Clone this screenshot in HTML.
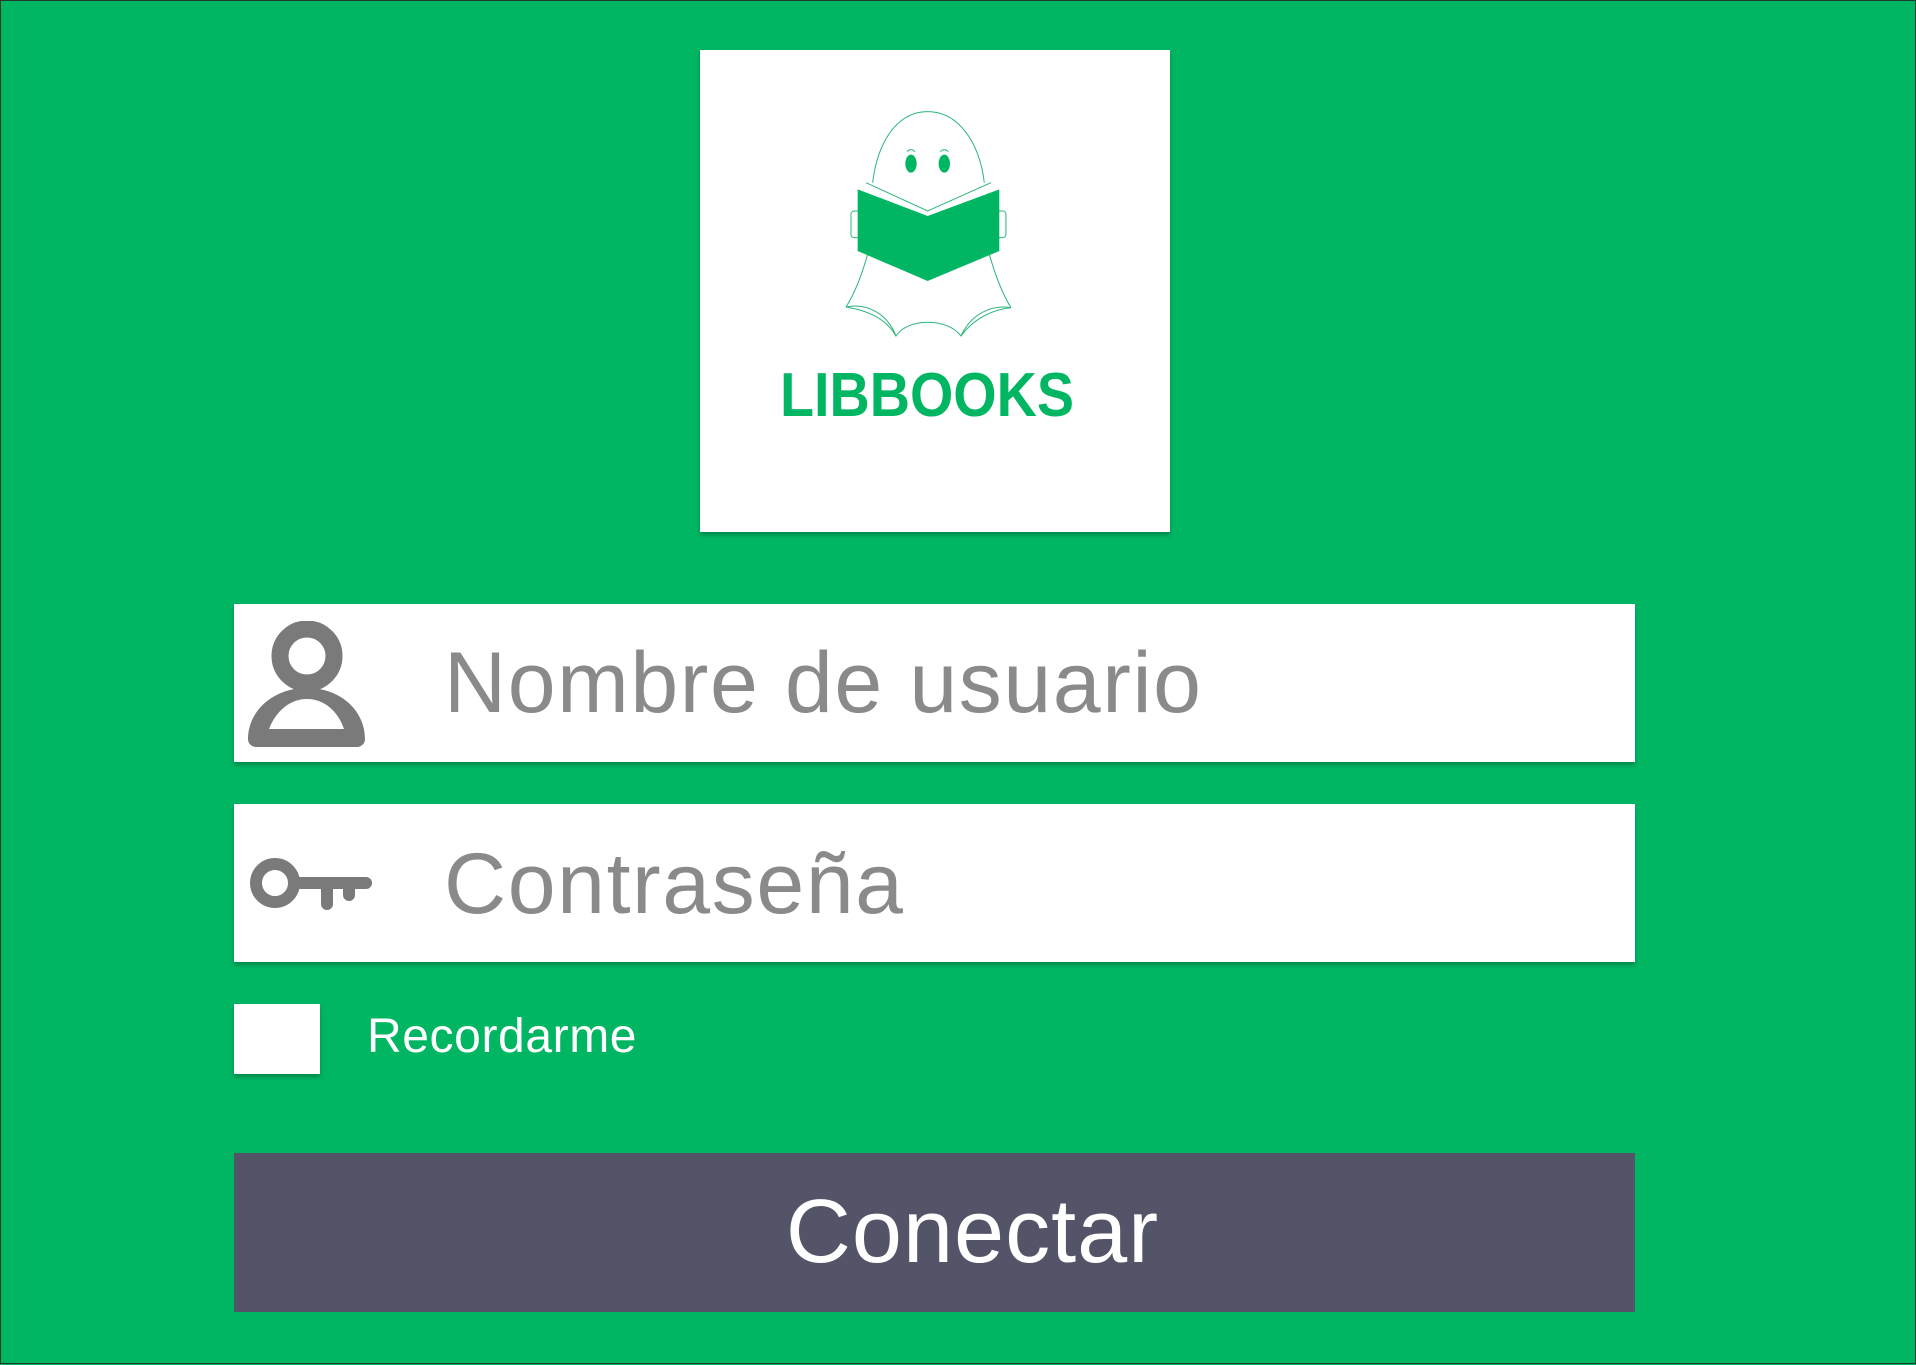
<!DOCTYPE html>
<html><head><meta charset="utf-8"><style>
html,body{margin:0;padding:0}
body{width:1916px;height:1364px;background:#00b662;position:relative;overflow:hidden;font-family:"Liberation Sans",sans-serif;box-sizing:border-box;border:1px solid #1f3a2c}
.box{position:absolute;background:#fff;box-shadow:0 3px 4px rgba(0,0,0,.25)}
.ph{position:absolute;left:443px;font-size:86px;color:#8a8a8a;line-height:1;letter-spacing:1.6px}
</style></head><body>
<div class="box" style="left:699px;top:49px;width:470px;height:482px"></div>
<svg style="position:absolute;left:0;top:0" width="1916" height="1364">
<g transform="translate(680,30) scale(0.3333)" fill="none" stroke="#2fb57a" stroke-width="3">
<path d="M575 455 C590 330 650 242 740 242 C830 242 895 330 910 455"/>
<path d="M560 670 C540 740 520 790 495 828 M925 670 C945 740 965 790 990 830"/>
<path d="M495 828 C560 815 620 850 645 915 C680 860 800 860 840 915 C870 850 930 820 990 830"/>
<path d="M495 828 C570 840 620 870 645 915 M840 915 C880 860 940 835 990 830"/>
<path d="M555 455 L740 540 L930 455"/>
<rect x="510" y="540" width="35" height="80" rx="10"/>
<rect x="940" y="540" width="35" height="80" rx="10"/>
<path d="M678 362 Q690 350 702 362 M778 362 Q790 350 802 362"/>
</g>
<g transform="translate(680,30) scale(0.3333)" fill="#00b662">
<polygon points="530,475 740,555 955,475 955,660 740,750 530,660"/>
<ellipse cx="690" cy="398" rx="17" ry="27"/>
<ellipse cx="790" cy="398" rx="17" ry="27"/>
</g>
<text x="926" y="415" text-anchor="middle" font-family="Liberation Sans" font-weight="bold" font-size="62" fill="#00b662" textLength="294" lengthAdjust="spacingAndGlyphs">LIBBOOKS</text>
</svg>
<div class="box" style="left:233px;top:603px;width:1401px;height:158px"></div>
<div class="box" style="left:233px;top:803px;width:1401px;height:158px"></div>
<svg style="position:absolute;left:247px;top:620px" width="118" height="128" viewBox="0 0 118 128">
<circle cx="59" cy="35" r="27" fill="none" stroke="#7a7a7a" stroke-width="17"/>
<path d="M0 118 C0 90 25 67 59 67 C93 67 117 90 117 118 A8 8 0 0 1 109 126 L8 126 A8 8 0 0 1 0 118Z M21 108 L96 108 C90 90 76 78 59 78 C42 78 28 90 21 108Z" fill="#7a7a7a" fill-rule="evenodd"/>
</svg>
<svg style="position:absolute;left:248px;top:856px" width="124" height="54" viewBox="0 0 124 54">
<circle cx="26" cy="26" r="19" fill="none" stroke="#7a7a7a" stroke-width="12"/>
<path d="M42 20 L117 20 A6 6 0 0 1 117 32 L106 32 L106 38 A6 6 0 0 1 94 38 L94 32 L84 32 L84 47 A6 6 0 0 1 72 47 L72 32 L42 32Z" fill="#7a7a7a"/>
</svg>
<div class="ph" style="top:639px">Nombre de usuario</div>
<div class="ph" style="top:840px">Contraseña</div>
<div class="box" style="left:233px;top:1003px;width:86px;height:70px"></div>
<div style="position:absolute;left:366px;top:1012px;font-size:48px;color:#fff;line-height:1;letter-spacing:0.6px">Recordarme</div>
<div style="position:absolute;left:233px;top:1152px;width:1401px;height:159px;background:#545469;color:#fff;font-size:90px;line-height:159px;text-align:center;text-indent:76px;letter-spacing:1px">Conectar</div>
</body></html>
